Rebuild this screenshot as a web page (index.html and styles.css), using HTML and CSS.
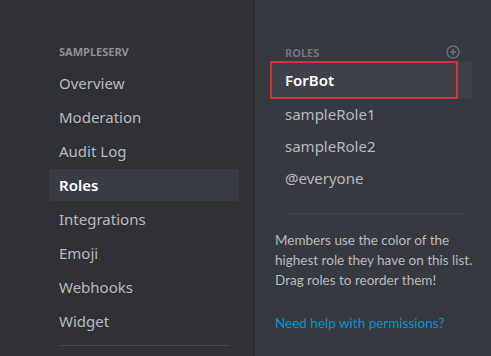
FILE: index.html
```html
<!DOCTYPE html>
<html lang="en">
<head>
    <meta charset="UTF-8">
    <title>Server Settings - Roles</title>
    <link rel="stylesheet" href="styles.css">
</head>
<body>
    <div class="settings">
        <!-- Left sidebar -->
        <nav class="sidebar">
            <div class="side-header">SAMPLESERV</div>
            <div class="side-item">Overview</div>
            <div class="side-item">Moderation</div>
            <div class="side-item">Audit Log</div>
            <div class="side-item selected">Roles</div>
            <div class="side-item">Integrations</div>
            <div class="side-item">Emoji</div>
            <div class="side-item">Webhooks</div>
            <div class="side-item">Widget</div>
            <div class="side-divider"></div>
        </nav>

        <!-- Roles column -->
        <section class="roles">
            <div class="roles-header">
                <span>ROLES</span>
                <svg class="add-icon" width="14" height="14" viewBox="0 0 14 14">
                    <circle cx="7" cy="7" r="6" fill="none" stroke="#6c6f75" stroke-width="1.5"/>
                    <path d="M7 4v6M4 7h6" stroke="#6c6f75" stroke-width="1.5"/>
                </svg>
            </div>
            <div class="role active">ForBot</div>
            <div class="role">sampleRole1</div>
            <div class="role">sampleRole2</div>
            <div class="role">@everyone</div>
            <div class="roles-divider"></div>
            <p class="roles-info">Members use the color of the highest role they have on this list. Drag roles to reorder them!</p>
            <a class="help-link" href="#">Need help with permissions?</a>
        </section>
    </div>
</body>
</html>
```

FILE: styles.css
```css
body {
    margin: 0;
    background: #36393f;
    font-family: 'Noto Sans', sans-serif;
}

.settings {
    display: flex;
    height: 356px;
    overflow: hidden;
}

.sidebar {
    width: 255px;
    flex-shrink: 0;
    box-sizing: border-box;
    background: #2f3136;
    padding: 44px 14px 0 49px;
    border-right: 2px solid #2a2c30;
}

.side-header {
    color: #8e9297;
    font-size: 11px;
    font-weight: 700;
    height: 16px;
    line-height: 16px;
    padding-left: 10px;
    margin-bottom: 7px;
}

.side-item {
    height: 32px;
    line-height: 32px;
    margin-bottom: 2px;
    padding-left: 10px;
    border-radius: 3px;
    color: #b9bbbe;
    font-size: 15px;
}

.side-item.selected {
    background: #393c43;
    color: #fff;
    font-weight: 600;
}

.side-divider {
    height: 1px;
    margin: 8px 9px 0 10px;
    background: #42454a;
}

.roles {
    flex: 1;
    padding: 44px 0 0 15px;
}

.roles-header {
    display: flex;
    align-items: center;
    justify-content: space-between;
    width: 175px;
    height: 16px;
    padding-left: 15px;
    margin-bottom: 2px;
    color: #72767d;
    font-size: 11px;
    font-weight: 700;
}

.role {
    position: relative;
    width: 187px;
    height: 32px;
    line-height: 32px;
    padding-left: 15px;
    color: #b9bbbe;
    font-size: 15px;
}

.role.active {
    height: 36px;
    line-height: 36px;
    background: #3e4147;
    color: #fff;
    font-weight: 600;
}

/* red annotation box drawn over the selected role */
.role.active::after {
    content: "";
    position: absolute;
    left: 0;
    top: -1px;
    width: 184px;
    height: 34px;
    border: 2px solid #d4303c;
}

.roles-divider {
    height: 1px;
    width: 179px;
    margin: 19px 0 0 15px;
    background: #42454a;
}

.roles-info {
    margin: 16px 0 0 5px;
    width: 200px;
    color: #b9bbbe;
    font-family: 'Lato', sans-serif;
    font-size: 13.5px;
    line-height: 20px;
}

.help-link {
    display: block;
    margin: 25px 0 0 5px;
    color: #0096cf;
    font-family: 'Lato', sans-serif;
    font-size: 13.5px;
    text-decoration: none;
}
```
